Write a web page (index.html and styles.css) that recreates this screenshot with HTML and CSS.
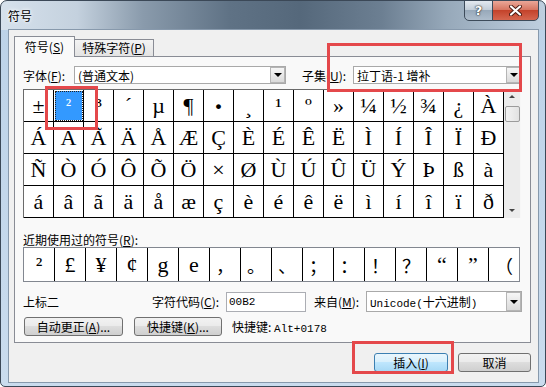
FILE: index.html
```html
<!DOCTYPE html>
<html>
  <head>
    <meta charset="utf-8">
    <title>符号</title>
    <link rel="stylesheet" href="styles.css">
  </head>
  <body>
    <div class="window">
      <div class="titlebar">
        <span class="title">符号</span>
        <div class="caption">
          <span class="cap help">?</span>
          <span class="cap close">
            <svg width="13" height="11" viewBox="0 0 13 11">
              <path d="M2 1.5 L11 9.5 M11 1.5 L2 9.5" stroke="#4a1a12" stroke-width="4" stroke-linecap="round"/>
              <path d="M2 1.5 L11 9.5 M11 1.5 L2 9.5" stroke="#fff" stroke-width="2.2" stroke-linecap="round"/>
            </svg>
          </span>
        </div>
      </div>

      <div class="client">
        <div class="tabs">
          <span class="tab active">符号(<u>S</u>)</span>
          <span class="tab">特殊字符(<u>P</u>)</span>
        </div>

        <div class="panel">
          <div class="row font-row">
            <span class="lbl">字体(<u>F</u>):</span>
            <div class="combo font-combo"><span class="val">(普通文本)</span><span class="drop"></span></div>
            <span class="lbl subset-lbl">子集(<u>U</u>):</span>
            <div class="combo subset-combo"><span class="val">拉丁语-1 增补</span><span class="drop"></span></div>
          </div>

          <div class="grid-wrap">
            <div class="grid">
              <span>±</span><span class="sel">²</span><span>³</span><span>´</span><span>µ</span><span>¶</span><span class="dot">·</span><span>¸</span>
              <span>¹</span><span>º</span><span>»</span><span>¼</span><span>½</span><span>¾</span><span>¿</span><span>À</span>
              <span>Á</span><span>Â</span><span>Ã</span><span>Ä</span><span>Å</span><span>Æ</span><span>Ç</span><span>È</span>
              <span>É</span><span>Ê</span><span>Ë</span><span>Ì</span><span>Í</span><span>Î</span><span>Ï</span><span>Ð</span>
              <span>Ñ</span><span>Ò</span><span>Ó</span><span>Ô</span><span>Õ</span><span>Ö</span><span>×</span><span>Ø</span>
              <span>Ù</span><span>Ú</span><span>Û</span><span>Ü</span><span>Ý</span><span>Þ</span><span>ß</span><span>à</span>
              <span>á</span><span>â</span><span>ã</span><span>ä</span><span>å</span><span>æ</span><span>ç</span><span>è</span>
              <span>é</span><span>ê</span><span>ë</span><span>ì</span><span>í</span><span>î</span><span>ï</span><span>ð</span>
            </div>
            <div class="vscroll">
              <span class="arr up"></span>
              <span class="thumb"></span>
              <span class="arr down"></span>
            </div>
          </div>

          <div class="recent-lbl">近期使用过的符号(<u>R</u>):</div>
          <div class="recent">
            <span>²</span><span>£</span><span>¥</span><span>¢</span><span>g</span><span>e</span><span class="cjk">，</span><span class="cjk">。</span>
            <span class="cjk">、</span><span class="cjk">；</span><span class="cjk">：</span><span class="cjk">！</span><span class="cjk">？</span><span>“</span><span>”</span><span class="cjk">（</span>
          </div>

          <div class="row info-row">
            <span class="name">上标二</span>
            <span class="code-lbl">字符代码(<u>C</u>):</span>
            <div class="code-input mono">00B2</div>
            <span class="from-lbl">来自(<u>M</u>):</span>
            <div class="combo from-combo"><span class="val"><span class="mono">Unicode(</span>十六进制<span class="mono">)</span></span><span class="drop"></span></div>
          </div>

          <div class="row btn-row">
            <button class="btn auto-btn">自动更正(<u>A</u>)...</button>
            <button class="btn key-btn">快捷键(<u>K</u>)...</button>
            <span class="key-txt">快捷键: <span class="mono">Alt+0178</span></span>
          </div>
        </div>

        <div class="dlg-btns">
          <button class="btn ins">插入(<u>I</u>)</button>
          <button class="btn cancel">取消</button>
        </div>
      </div>

      <!-- red annotation boxes -->
      <div class="mark m1"></div>
      <div class="mark m2"></div>
      <div class="mark m3"></div>
    </div>
  </body>
</html>
```

FILE: styles.css
```css
body {
  margin: 0;
  font-family: "Noto Sans CJK SC", "Liberation Sans", sans-serif;
  font-size: 12px;
  color: #000;
  background: #fff;
}
.window {
  position: relative;
  width: 546px;
  height: 387px;
  box-sizing: border-box;
  border: 1px solid #3b4857;
  border-radius: 7px 7px 5px 5px;
  padding: 0 6px 4px 7px;
  background:
    linear-gradient(to right, #d6e1ec 0%, #c4d1de 14%, #8a9bac 26%, #5f7285 42%, #55687b 55%, #6c7f92 70%, #97a9ba 82%, #bfcfdf 100%) top / 100% 29px no-repeat,
    linear-gradient(#bcd2e8, #cadcee);
}
.titlebar {
  height: 28px;
  display: flex;
  justify-content: space-between;
  align-items: flex-start;
}
.title {
  margin-top: 7px;
  line-height: 16px;
  text-shadow: 0 0 5px #fff, 0 0 3px #fff;
}
.caption {
  display: flex;
  margin-top: -1px;
}
.cap {
  height: 21px;
  box-sizing: border-box;
  border: 1px solid #3d4b5a;
  display: flex;
  align-items: center;
  justify-content: center;
}
.help {
  width: 29px;
  border-radius: 0 0 0 5px;
  background: linear-gradient(#e3e9f0, #c3ced9 45%, #98a9ba 50%, #aebdcc);
  color: #fff;
  font: bold 13px "DejaVu Sans", sans-serif;
  text-shadow: 0 0 2px #222, 0 0 1px #000;
}
.close {
  width: 47px;
  margin-left: -1px;
  border-radius: 0 0 5px 0;
  background: linear-gradient(#eaa798, #d77763 45%, #c4432b 50%, #d5664f);
}
.client {
  height: 354px;
  box-sizing: border-box;
  border: 1px solid #8799ac;
  background: #f0f0f0;
  padding: 6px 7px 0 5px;
}
.tabs {
  display: flex;
  align-items: flex-end;
  height: 21px;
  margin-bottom: -1px;
  position: relative;
  z-index: 1;
}
.tab {
  width: 80px;
  height: 17px;
  box-sizing: border-box;
  margin-bottom: 1px;
  margin-left: -1px;
  border: 1px solid #898c95;
  border-bottom: none;
  background: linear-gradient(#f3f3f3, #e3e3e3);
  line-height: 16px;
  text-align: center;
}
.tab.active {
  width: 61px;
  height: 21px;
  margin: 0;
  background: #f9f9f9;
  line-height: 20px;
  position: relative;
  z-index: 2;
}
.panel {
  height: 287px;
  box-sizing: border-box;
  border: 1px solid #898c95;
  background: #f9f9f9;
  padding: 9px 0 0 8px;
}
.row {
  display: flex;
  align-items: center;
}
.font-row {
  height: 18px;
}
.lbl {
  width: 51px;
  white-space: nowrap;
}
.combo {
  height: 18px;
  box-sizing: border-box;
  border: 1px solid #a9a9a9;
  background: #fff;
  display: flex;
  align-items: center;
  justify-content: space-between;
}
.font-combo {
  width: 212px;
}
.subset-lbl {
  margin-left: 16px;
}
.subset-combo {
  width: 169px;
}
.val {
  padding-left: 3px;
  white-space: nowrap;
}
.drop {
  width: 15px;
  height: 16px;
  box-sizing: border-box;
  border: 1px solid #b5b5b5;
  background: linear-gradient(#f6f6f6, #dadada);
  display: flex;
  align-items: center;
  justify-content: center;
}
.drop::after {
  content: "";
  border-left: 4px solid transparent;
  border-right: 4px solid transparent;
  border-top: 4px solid #000;
}
.grid-wrap {
  display: flex;
  margin-top: 5px;
}
.grid {
  display: grid;
  grid-template-columns: repeat(16, 30px);
  grid-auto-rows: 32px;
  border-top: 1px solid #6a6a6a;
  border-left: 1px solid #6a6a6a;
  background: #fff;
}
.grid span {
  box-sizing: border-box;
  border-right: 1px solid #000;
  border-bottom: 1px solid #000;
  display: flex;
  align-items: center;
  justify-content: center;
  font: 22px "Liberation Serif", serif;
}
.grid .sel {
  background: #3399ff;
  color: #fff;
  font-size: 18px;
  box-shadow: inset 0 0 0 1px #fff;
  outline: 1px dotted #222;
  outline-offset: -2px;
}
.grid .dot {
  font-weight: bold;
  font-size: 30px;
}
.vscroll {
  width: 17px;
  height: 129px;
  box-sizing: border-box;
  background: #ececec;
  border-right: 1px solid #f7f7f7;
  display: flex;
  flex-direction: column;
  align-items: center;
}
.arr {
  border-left: 3px solid transparent;
  border-right: 3px solid transparent;
}
.arr.up {
  margin-top: 6px;
  border-bottom: 3px solid #444;
}
.arr.down {
  margin-top: auto;
  margin-bottom: 6px;
  border-top: 3px solid #444;
}
.thumb {
  width: 15px;
  height: 16px;
  margin-top: 8px;
  box-sizing: border-box;
  border: 1px solid #9b9b9b;
  border-radius: 2px;
  background: linear-gradient(to right, #f4f4f4, #e2e2e2);
}
.recent-lbl {
  margin-top: 15px;
  line-height: 14px;
}
.recent {
  display: flex;
  width: max-content;
  height: 35px;
  box-sizing: border-box;
  border: 1px solid #828790;
  background: #fff;
}
.recent span {
  width: 30px;
  border-right: 1px solid #000;
  display: flex;
  align-items: center;
  justify-content: center;
  font: 22px "Liberation Serif", "Noto Sans CJK SC", serif;
}
.recent span:last-child {
  border-right: none;
}
.recent .cjk {
  font: 18px "Noto Sans CJK SC", sans-serif;
}
.info-row {
  margin-top: 9px;
  height: 21px;
}
.name {
  width: 129px;
}
.code-lbl {
  width: 74px;
  white-space: nowrap;
}
.mono {
  font-family: "Liberation Mono", "Noto Sans CJK SC", monospace;
  font-size: 11px;
}
.code-input {
  width: 80px;
  height: 20px;
  box-sizing: border-box;
  border: 1px solid #abadb3;
  background: #fff;
  padding-left: 2px;
  display: flex;
  align-items: center;
}
.from-lbl {
  margin-left: 8px;
  width: 52px;
  white-space: nowrap;
}
.from-combo {
  width: 156px;
  height: 21px;
}
.from-combo .drop {
  height: 19px;
}
.btn-row {
  margin-top: 5px;
  height: 19px;
}
.btn {
  height: 19px;
  box-sizing: border-box;
  padding: 0;
  border: 1px solid #707070;
  border-radius: 3px;
  background: linear-gradient(#f2f2f2 0%, #ebebeb 45%, #dddddd 50%, #cfcfcf 100%);
  font: 12px "Noto Sans CJK SC", sans-serif;
  color: #000;
  display: flex;
  align-items: center;
  justify-content: center;
  white-space: nowrap;
}
.auto-btn {
  margin-left: 1px;
  width: 99px;
}
.key-btn {
  margin-left: 11px;
  width: 88px;
}
.key-txt {
  margin-left: 10px;
  white-space: nowrap;
}
.dlg-btns {
  display: flex;
  justify-content: flex-end;
  gap: 10px;
  margin-top: 10px;
}
.ins {
  width: 74px;
  border-color: #3c7fb1;
  background: linear-gradient(#eaf6fd 0%, #d9f0fc 45%, #bee6fd 50%, #a7d9f5 100%);
}
.cancel {
  width: 73px;
}
.mark {
  position: absolute;
  box-sizing: border-box;
  border: 3px solid #e4484b;
}
.m1 {
  left: 326px;
  top: 42px;
  width: 195px;
  height: 49px;
}
.m2 {
  left: 44px;
  top: 85px;
  width: 53px;
  height: 44px;
}
.m3 {
  left: 351px;
  top: 340px;
  width: 102px;
  height: 33px;
}
```
